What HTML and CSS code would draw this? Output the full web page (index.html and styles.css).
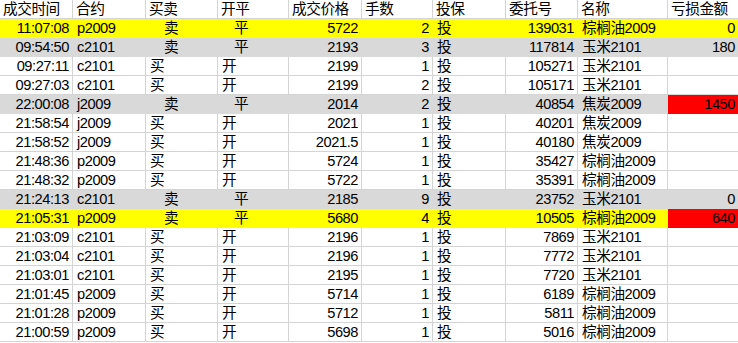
FILE: index.html
```html
<!DOCTYPE html>
<html lang="zh">
<head>
<meta charset="utf-8">
<title>成交记录</title>
<link rel="stylesheet" href="styles.css">
</head>
<body>
<table class="sheet">
  <colgroup>
    <col class="c-time"><col class="c-code"><col class="c-bs"><col class="c-oc"><col class="c-price">
    <col class="c-qty"><col class="c-hedge"><col class="c-order"><col class="c-name"><col class="c-pnl">
  </colgroup>
  <thead>
    <tr class="head">
      <th>成交时间</th><th>合约</th><th>买卖</th><th>开平</th><th>成交价格</th><th>手数</th><th>投保</th><th>委托号</th><th>名称</th><th>亏损金额</th>
    </tr>
  </thead>
  <tbody>
    <tr class="yellow"><td class="r">11:07:08</td><td>p2009</td><td class="sell">卖</td><td class="close">平</td><td class="r">5722</td><td class="r">2</td><td>投</td><td class="r">139031</td><td>棕榈油2009</td><td class="r">0</td></tr>
    <tr class="gray"><td class="r">09:54:50</td><td>c2101</td><td class="sell">卖</td><td class="close">平</td><td class="r">2193</td><td class="r">3</td><td>投</td><td class="r">117814</td><td>玉米2101</td><td class="r">180</td></tr>
    <tr><td class="r">09:27:11</td><td>c2101</td><td>买</td><td>开</td><td class="r">2199</td><td class="r">1</td><td>投</td><td class="r">105271</td><td>玉米2101</td><td></td></tr>
    <tr><td class="r">09:27:03</td><td>c2101</td><td>买</td><td>开</td><td class="r">2199</td><td class="r">2</td><td>投</td><td class="r">105171</td><td>玉米2101</td><td></td></tr>
    <tr class="gray"><td class="r">22:00:08</td><td>j2009</td><td class="sell">卖</td><td class="close">平</td><td class="r">2014</td><td class="r">2</td><td>投</td><td class="r">40854</td><td>焦炭2009</td><td class="r red">1450</td></tr>
    <tr><td class="r">21:58:54</td><td>j2009</td><td>买</td><td>开</td><td class="r">2021</td><td class="r">1</td><td>投</td><td class="r">40201</td><td>焦炭2009</td><td></td></tr>
    <tr><td class="r">21:58:52</td><td>j2009</td><td>买</td><td>开</td><td class="r">2021.5</td><td class="r">1</td><td>投</td><td class="r">40180</td><td>焦炭2009</td><td></td></tr>
    <tr><td class="r">21:48:36</td><td>p2009</td><td>买</td><td>开</td><td class="r">5724</td><td class="r">1</td><td>投</td><td class="r">35427</td><td>棕榈油2009</td><td></td></tr>
    <tr><td class="r">21:48:32</td><td>p2009</td><td>买</td><td>开</td><td class="r">5722</td><td class="r">1</td><td>投</td><td class="r">35391</td><td>棕榈油2009</td><td></td></tr>
    <tr class="gray"><td class="r">21:24:13</td><td>c2101</td><td class="sell">卖</td><td class="close">平</td><td class="r">2185</td><td class="r">9</td><td>投</td><td class="r">23752</td><td>玉米2101</td><td class="r">0</td></tr>
    <tr class="yellow"><td class="r">21:05:31</td><td>p2009</td><td class="sell">卖</td><td class="close">平</td><td class="r">5680</td><td class="r">4</td><td>投</td><td class="r">10505</td><td>棕榈油2009</td><td class="r red">640</td></tr>
    <tr><td class="r">21:03:09</td><td>c2101</td><td>买</td><td>开</td><td class="r">2196</td><td class="r">1</td><td>投</td><td class="r">7869</td><td>玉米2101</td><td></td></tr>
    <tr><td class="r">21:03:04</td><td>c2101</td><td>买</td><td>开</td><td class="r">2196</td><td class="r">1</td><td>投</td><td class="r">7772</td><td>玉米2101</td><td></td></tr>
    <tr><td class="r">21:03:01</td><td>c2101</td><td>买</td><td>开</td><td class="r">2195</td><td class="r">1</td><td>投</td><td class="r">7720</td><td>玉米2101</td><td></td></tr>
    <tr><td class="r">21:01:45</td><td>p2009</td><td>买</td><td>开</td><td class="r">5714</td><td class="r">1</td><td>投</td><td class="r">6189</td><td>棕榈油2009</td><td></td></tr>
    <tr><td class="r">21:01:28</td><td>p2009</td><td>买</td><td>开</td><td class="r">5712</td><td class="r">1</td><td>投</td><td class="r">5811</td><td>棕榈油2009</td><td></td></tr>
    <tr><td class="r">21:00:59</td><td>p2009</td><td>买</td><td>开</td><td class="r">5698</td><td class="r">1</td><td>投</td><td class="r">5016</td><td>棕榈油2009</td><td></td></tr>
  </tbody>
</table>
</body>
</html>
```

FILE: styles.css
```css
html, body {
  margin: 0;
  padding: 0;
  background: #ffffff;
}

.sheet {
  border-collapse: separate;
  border-spacing: 0;
  table-layout: fixed;
  width: 738px;
  font-family: "Liberation Sans", "Noto Sans CJK SC", sans-serif;
  font-size: 14.67px;
  letter-spacing: -0.45px;
  color: #000000;
}

.c-time { width: 73px; }
.c-code { width: 73px; }
.c-bs { width: 72px; }
.c-oc { width: 71px; }
.c-price { width: 73px; }
.c-qty { width: 71px; }
.c-hedge { width: 73px; }
.c-order { width: 72px; }
.c-name { width: 90px; }
.c-pnl { width: 70px; }

.sheet th,
.sheet td {
  box-sizing: border-box;
  height: 19px;
  padding: 0 3px 0 4px;
  line-height: 17px;
  border-right: 1px solid #d4d4d4;
  border-bottom: 1px solid #d4d4d4;
  text-align: left;
  vertical-align: bottom;
  font-weight: normal;
  white-space: nowrap;
  overflow: hidden;
}

.sheet th {
  padding-left: 3px;
}

.sheet th:last-child,
.sheet td:last-child {
  border-right: none;
}

.sheet .r {
  text-align: right;
}

.sheet .sell {
  padding-left: 18px;
}

.sheet .close {
  padding-left: 16px;
}

.yellow td {
  background: #ffff00;
  border-color: #ffff00;
}

.gray td {
  background: #d9d9d9;
  border-color: #d9d9d9;
}

.sheet td.red {
  background: #ff0000;
  border-color: #ff0000;
}
```
